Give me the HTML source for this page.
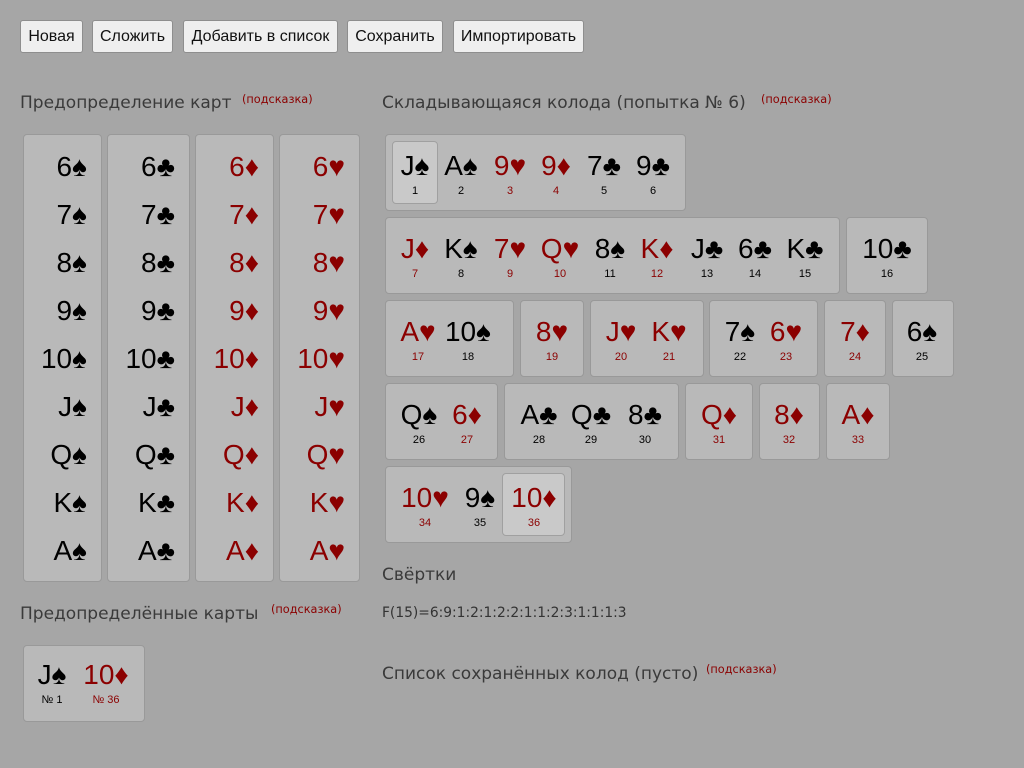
<!DOCTYPE html>
<html><head><meta charset="utf-8"><style>
body{margin:0;width:1024px;height:768px;background:#a6a6a6;font-family:"Liberation Sans",sans-serif;position:relative;overflow:hidden}
.b{position:absolute;top:20px;height:33px;box-sizing:border-box;background:#efefef;border:1px solid #8e8e8e;border-radius:3px;font-size:16px;line-height:31px;text-align:center;color:#111}
.h{position:absolute;font-family:"DejaVu Sans",sans-serif;font-size:17px;color:#3a3a3a;white-space:nowrap}
.hint{position:absolute;font-family:"DejaVu Sans",sans-serif;font-size:11.3px;color:#8b0000;white-space:nowrap}
.box{position:absolute;background:#b9b9b9;border:1px solid #999;border-radius:4px;box-sizing:border-box}
.hl{position:absolute;background:#c9c9c9;border:1px solid #a0a0a0;border-radius:4px;box-sizing:border-box}
.col{position:absolute;top:134px;height:448px;background:#b9b9b9;border:1px solid #999;border-radius:4px;box-sizing:border-box;padding-right:14px;text-align:right;font-family:"Liberation Sans",sans-serif;font-size:28px;line-height:48px;padding-top:8px}
.k{position:absolute;width:64px;text-align:center;color:#000}
.k .r{font-family:"Liberation Sans",sans-serif;font-size:28px;line-height:30px;white-space:nowrap}
.k .n{font-size:11px;line-height:14px;margin-top:3px}
.red{color:#8b0000}
</style></head><body>
<div class="b" style="left:20px;width:63px">Новая</div>
<div class="b" style="left:92px;width:81px">Сложить</div>
<div class="b" style="left:183px;width:155px">Добавить в список</div>
<div class="b" style="left:347px;width:96px">Сохранить</div>
<div class="b" style="left:453px;width:131px">Импортировать</div>

<div class="h" style="left:20px;top:93px">Предопределение карт</div>
<div class="hint" style="left:242px;top:93px">(подсказка)</div>
<div class="h" style="left:382px;top:93px">Складывающаяся колода (попытка № 6)</div>
<div class="hint" style="left:761px;top:93px">(подсказка)</div>

<div class="col" style="left:23px;width:79px">6♠<br>7♠<br>8♠<br>9♠<br>10♠<br>J♠<br>Q♠<br>K♠<br>A♠</div>
<div class="col" style="left:107px;width:83px">6♣<br>7♣<br>8♣<br>9♣<br>10♣<br>J♣<br>Q♣<br>K♣<br>A♣</div>
<div class="col red" style="left:195px;width:79px">6♦<br>7♦<br>8♦<br>9♦<br>10♦<br>J♦<br>Q♦<br>K♦<br>A♦</div>
<div class="col red" style="left:279px;width:81px">6♥<br>7♥<br>8♥<br>9♥<br>10♥<br>J♥<br>Q♥<br>K♥<br>A♥</div>

<div class="h" style="left:20px;top:604px">Предопределённые карты</div>
<div class="hint" style="left:271px;top:603px">(подсказка)</div>
<div class="box" style="left:23px;top:645px;width:122px;height:77px"></div>
<div class="k" style="left:20px;top:660px"><div class="r">J♠</div><div class="n">№ 1</div></div>
<div class="k red" style="left:74px;top:660px"><div class="r">10♦</div><div class="n">№ 36</div></div>

<div class="box" style="left:385px;top:134px;width:301px;height:77px"></div>
<div class="hl" style="left:392px;top:141px;width:46px;height:63px"></div>
<div class="k" style="left:383px;top:151px"><div class="r">J♠</div><div class="n">1</div></div>
<div class="k" style="left:429px;top:151px"><div class="r">A♠</div><div class="n">2</div></div>
<div class="k red" style="left:478px;top:151px"><div class="r">9♥</div><div class="n">3</div></div>
<div class="k red" style="left:524px;top:151px"><div class="r">9♦</div><div class="n">4</div></div>
<div class="k" style="left:572px;top:151px"><div class="r">7♣</div><div class="n">5</div></div>
<div class="k" style="left:621px;top:151px"><div class="r">9♣</div><div class="n">6</div></div>

<div class="box" style="left:385px;top:217px;width:455px;height:77px"></div>
<div class="box" style="left:846px;top:217px;width:82px;height:77px"></div>
<div class="k red" style="left:383px;top:234px"><div class="r">J♦</div><div class="n">7</div></div>
<div class="k" style="left:429px;top:234px"><div class="r">K♠</div><div class="n">8</div></div>
<div class="k red" style="left:478px;top:234px"><div class="r">7♥</div><div class="n">9</div></div>
<div class="k red" style="left:528px;top:234px"><div class="r">Q♥</div><div class="n">10</div></div>
<div class="k" style="left:578px;top:234px"><div class="r">8♠</div><div class="n">11</div></div>
<div class="k red" style="left:625px;top:234px"><div class="r">K♦</div><div class="n">12</div></div>
<div class="k" style="left:675px;top:234px"><div class="r">J♣</div><div class="n">13</div></div>
<div class="k" style="left:723px;top:234px"><div class="r">6♣</div><div class="n">14</div></div>
<div class="k" style="left:773px;top:234px"><div class="r">K♣</div><div class="n">15</div></div>
<div class="k" style="left:855px;top:234px"><div class="r">10♣</div><div class="n">16</div></div>

<div class="box" style="left:385px;top:300px;width:129px;height:77px"></div>
<div class="box" style="left:520px;top:300px;width:64px;height:77px"></div>
<div class="box" style="left:590px;top:300px;width:114px;height:77px"></div>
<div class="box" style="left:709px;top:300px;width:109px;height:77px"></div>
<div class="box" style="left:824px;top:300px;width:62px;height:77px"></div>
<div class="box" style="left:892px;top:300px;width:62px;height:77px"></div>
<div class="k red" style="left:386px;top:317px"><div class="r">A♥</div><div class="n">17</div></div>
<div class="k" style="left:436px;top:317px"><div class="r">10♠</div><div class="n">18</div></div>
<div class="k red" style="left:520px;top:317px"><div class="r">8♥</div><div class="n">19</div></div>
<div class="k red" style="left:589px;top:317px"><div class="r">J♥</div><div class="n">20</div></div>
<div class="k red" style="left:637px;top:317px"><div class="r">K♥</div><div class="n">21</div></div>
<div class="k" style="left:708px;top:317px"><div class="r">7♠</div><div class="n">22</div></div>
<div class="k red" style="left:754px;top:317px"><div class="r">6♥</div><div class="n">23</div></div>
<div class="k red" style="left:823px;top:317px"><div class="r">7♦</div><div class="n">24</div></div>
<div class="k" style="left:890px;top:317px"><div class="r">6♠</div><div class="n">25</div></div>

<div class="box" style="left:385px;top:383px;width:113px;height:77px"></div>
<div class="box" style="left:504px;top:383px;width:175px;height:77px"></div>
<div class="box" style="left:685px;top:383px;width:68px;height:77px"></div>
<div class="box" style="left:759px;top:383px;width:61px;height:77px"></div>
<div class="box" style="left:826px;top:383px;width:64px;height:77px"></div>
<div class="k" style="left:387px;top:400px"><div class="r">Q♠</div><div class="n">26</div></div>
<div class="k red" style="left:435px;top:400px"><div class="r">6♦</div><div class="n">27</div></div>
<div class="k" style="left:507px;top:400px"><div class="r">A♣</div><div class="n">28</div></div>
<div class="k" style="left:559px;top:400px"><div class="r">Q♣</div><div class="n">29</div></div>
<div class="k" style="left:613px;top:400px"><div class="r">8♣</div><div class="n">30</div></div>
<div class="k red" style="left:687px;top:400px"><div class="r">Q♦</div><div class="n">31</div></div>
<div class="k red" style="left:757px;top:400px"><div class="r">8♦</div><div class="n">32</div></div>
<div class="k red" style="left:826px;top:400px"><div class="r">A♦</div><div class="n">33</div></div>

<div class="box" style="left:385px;top:466px;width:187px;height:77px"></div>
<div class="hl" style="left:502px;top:473px;width:63px;height:63px"></div>
<div class="k red" style="left:393px;top:483px"><div class="r">10♥</div><div class="n">34</div></div>
<div class="k" style="left:448px;top:483px"><div class="r">9♠</div><div class="n">35</div></div>
<div class="k red" style="left:502px;top:483px"><div class="r">10♦</div><div class="n">36</div></div>

<div class="h" style="left:382px;top:565px">Свёртки</div>
<div style="position:absolute;left:382px;top:605px;font-family:'DejaVu Sans',sans-serif;font-size:13.8px;color:#333">F(15)=6:9:1:2:1:2:2:1:1:2:3:1:1:1:3</div>
<div class="h" style="left:382px;top:664px">Список сохранённых колод (пусто)</div>
<div class="hint" style="left:706px;top:663px">(подсказка)</div>
</body></html>
